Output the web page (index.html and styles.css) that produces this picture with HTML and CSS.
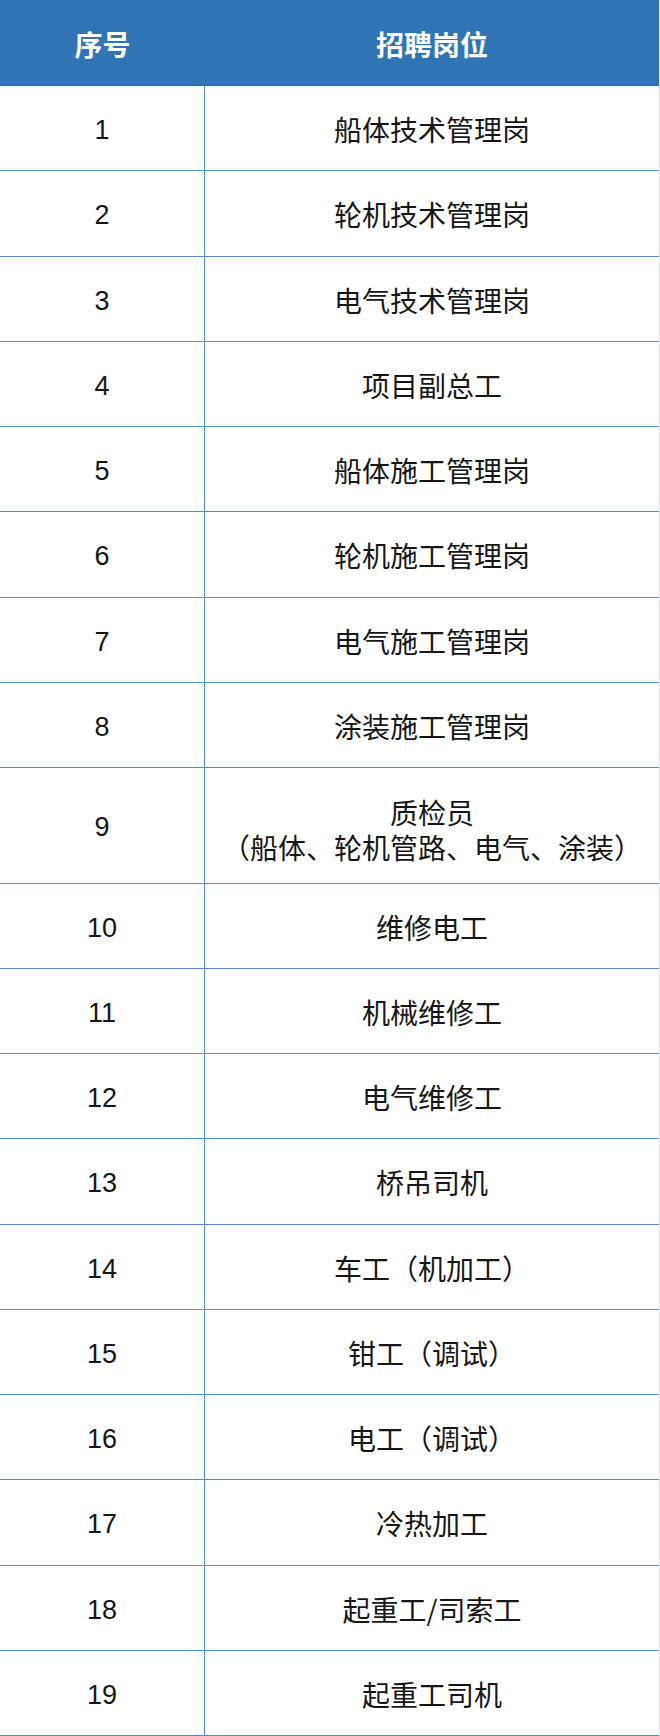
FILE: index.html
```html
<!DOCTYPE html>
<html lang="zh-CN">
<head>
<meta charset="utf-8">
<title>招聘岗位</title>
<link rel="stylesheet" href="styles.css">
</head>
<body>
<div class="table">
  <div class="row head">
    <div class="cell num">序号</div>
    <div class="cell name">招聘岗位</div>
  </div>
  <div class="row"><div class="cell num">1</div><div class="cell name">船体技术管理岗</div></div>
  <div class="row"><div class="cell num">2</div><div class="cell name">轮机技术管理岗</div></div>
  <div class="row"><div class="cell num">3</div><div class="cell name">电气技术管理岗</div></div>
  <div class="row"><div class="cell num">4</div><div class="cell name">项目副总工</div></div>
  <div class="row"><div class="cell num">5</div><div class="cell name">船体施工管理岗</div></div>
  <div class="row"><div class="cell num">6</div><div class="cell name">轮机施工管理岗</div></div>
  <div class="row"><div class="cell num">7</div><div class="cell name">电气施工管理岗</div></div>
  <div class="row"><div class="cell num">8</div><div class="cell name">涂装施工管理岗</div></div>
  <div class="row tall"><div class="cell num">9</div><div class="cell name two"><span>质检员</span><span>（船体、轮机管路、电气、涂装）</span></div></div>
  <div class="row"><div class="cell num">10</div><div class="cell name">维修电工</div></div>
  <div class="row"><div class="cell num">11</div><div class="cell name">机械维修工</div></div>
  <div class="row"><div class="cell num">12</div><div class="cell name">电气维修工</div></div>
  <div class="row"><div class="cell num">13</div><div class="cell name">桥吊司机</div></div>
  <div class="row"><div class="cell num">14</div><div class="cell name">车工（机加工）</div></div>
  <div class="row"><div class="cell num">15</div><div class="cell name">钳工（调试）</div></div>
  <div class="row"><div class="cell num">16</div><div class="cell name">电工（调试）</div></div>
  <div class="row"><div class="cell num">17</div><div class="cell name">冷热加工</div></div>
  <div class="row"><div class="cell num">18</div><div class="cell name">起重工/司索工</div></div>
  <div class="row"><div class="cell num">19</div><div class="cell name">起重工司机</div></div>
</div>
</body>
</html>
```

FILE: styles.css
```css
html, body {
  margin: 0;
  padding: 0;
  background: #ffffff;
}

.table {
  width: 660px;
  display: flex;
  flex-direction: column;
  font-family: "Noto Sans CJK SC", "Noto Sans", sans-serif;
  color: #161616;
  border-right: 1px solid #dfe6ee;
  box-sizing: border-box;
}

.row {
  display: grid;
  grid-template-columns: 205px 1fr;
  height: 85.25px;
  box-sizing: border-box;
  border-bottom: 1.5px solid #5a8bc5;
}

.row.head {
  height: 86px;
  background: #2f74b5;
  color: #ffffff;
  border-bottom: 1px solid #2a66a0;
}

.row.tall {
  height: 115.5px;
}

.cell {
  display: flex;
  align-items: center;
  justify-content: center;
  font-size: 28px;
  line-height: 1;
}

.cell.num {
  border-right: 1.5px solid #5a8bc5;
  font-family: "Liberation Sans", "Noto Sans CJK SC", sans-serif;
  font-size: 27px;
  padding-top: 5px;
  box-sizing: border-box;
}

.head .cell {
  border-right: none;
  font-family: "Noto Sans CJK SC", sans-serif;
  font-weight: 700;
  font-size: 28px;
  padding-top: 2px;
}

.cell.name {
  padding-top: 2px;
  box-sizing: border-box;
}

.cell.two {
  flex-direction: column;
  line-height: 35px;
  padding-top: 10px;
}
```
